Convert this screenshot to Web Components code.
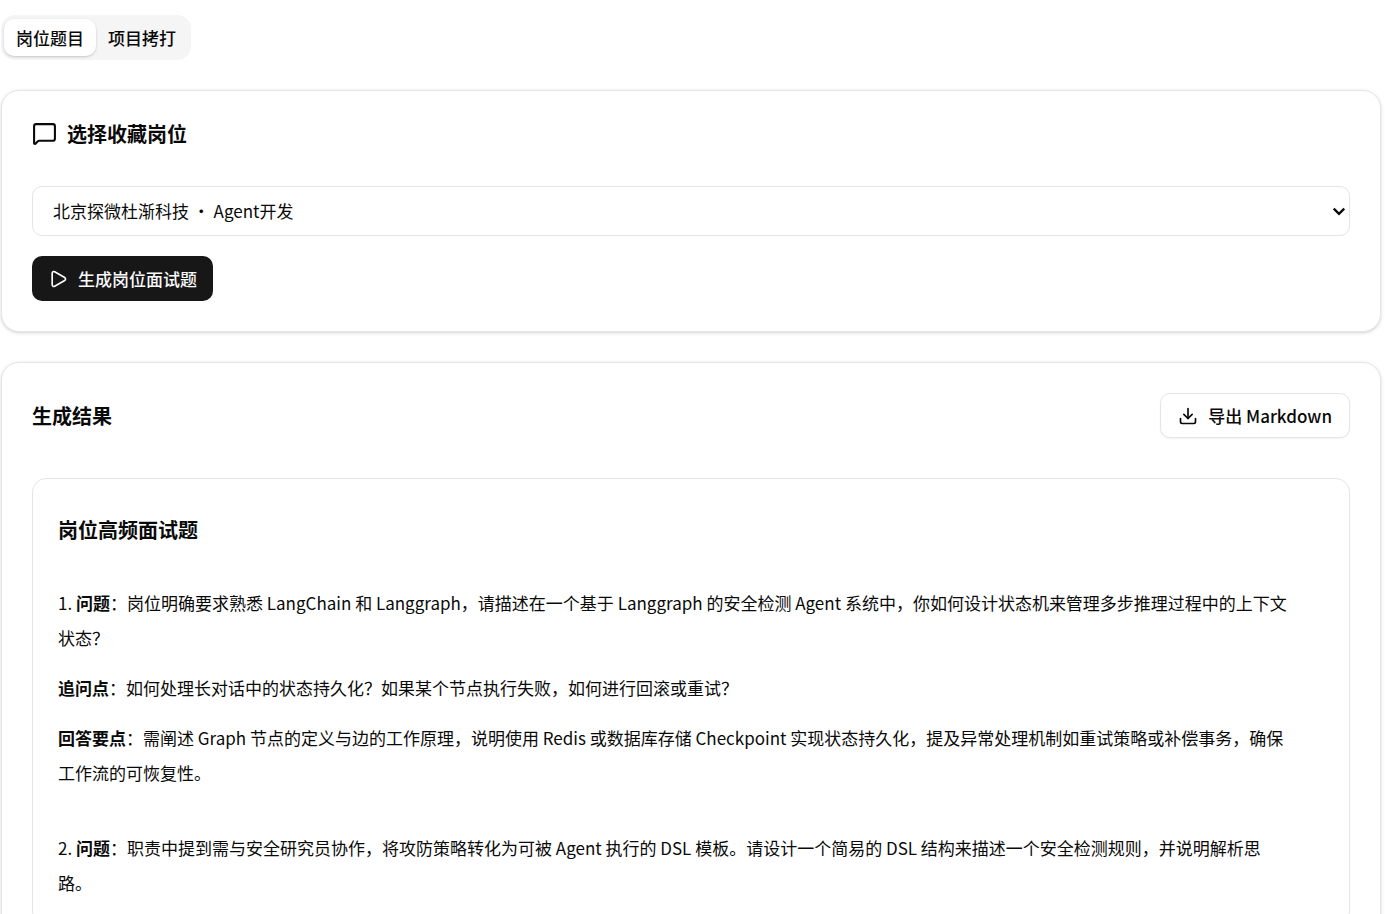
<!DOCTYPE html>
<html lang="zh-CN">
<head>
<meta charset="UTF-8">
<meta name="viewport" content="width=device-width, initial-scale=1">
<title>岗位题目</title>
<style>
    body {
        margin: 0;
        background: #fff;
        color: #0a0a0a;
        font: 17px/25px "Noto Sans CJK SC", sans-serif;
        --border: #e5e5e5;
        --primary: #171717;
        --muted: #f5f5f5;
    }
</style>
</head>
<body>
<interview-page>
    <tab-bar label="面试题类型">
        <tab-item selected>岗位题目</tab-item>
        <tab-item>项目拷打</tab-item>
    </tab-bar>

    <panel-card>
        <ui-icon slot="icon" name="message" size="25"></ui-icon>
        <span slot="title">选择收藏岗位</span>
        <job-select label="收藏岗位">
            <option>北京探微杜渐科技 • Agent开发</option>
        </job-select>
        <ui-button icon="play">生成岗位面试题</ui-button>
    </panel-card>

    <panel-card>
        <span slot="title">生成结果</span>
        <ui-button slot="action" icon="download" variant="outline">导出 Markdown</ui-button>
        <result-box>
            <span slot="heading">岗位高频面试题</span>
            <question-item number="1">
                <span slot="question">岗位明确要求熟悉 LangChain 和 Langgraph，请描述在一个基于 Langgraph 的安全检测 Agent 系统中，你如何设计状态机来管理多步推理过程中的上下文状态？</span>
                <span slot="follow">如何处理长对话中的状态持久化？如果某个节点执行失败，如何进行回滚或重试？</span>
                <span slot="answer">需阐述 Graph 节点的定义与边的工作原理，说明使用 Redis 或数据库存储 Checkpoint 实现状态持久化，提及异常处理机制如重试策略或补偿事务，确保工作流的可恢复性。</span>
            </question-item>
            <question-item number="2">
                <span slot="question">职责中提到需与安全研究员协作，将攻防策略转化为可被 Agent 执行的 DSL 模板。请设计一个简易的 DSL 结构来描述一个安全检测规则，并说明解析思路。</span>
            </question-item>
        </result-box>
    </panel-card>
</interview-page>

<script>
const icons = {
    message: '<path d="M22 17a2 2 0 0 1-2 2H6.828a2 2 0 0 0-1.414.586l-2.202 2.202A.71.71 0 0 1 2 21.286V5a2 2 0 0 1 2-2h16a2 2 0 0 1 2 2z"/>',
    play: '<path d="M5 5a2 2 0 0 1 3.008-1.728l11.997 6.998a2 2 0 0 1 .003 3.458l-12 7A2 2 0 0 1 5 19z"/>',
    download: '<path d="M12 15V3"/><path d="M21 15v4a2 2 0 0 1-2 2H5a2 2 0 0 1-2-2v-4"/><path d="m7 10 5 5 5-5"/>',
    chevron: '<path d="m3 8 9 9 9-9" stroke-width="4" stroke-linecap="butt" stroke-linejoin="miter"/>'
};

class BaseElement extends HTMLElement {
    constructor() {
        super();
        this._sR = this.attachShadow({ mode: 'open' });
    }

    connectedCallback() {
        this._sR.innerHTML = this.template();
    }
}

class UiIcon extends BaseElement {
    template() {
        const size = this.getAttribute('size') || 20;
        return `
        <style>
            :host { display: block; flex: none; }
            svg { display: block; }
        </style>
        <svg width="${size}" height="${size}" viewBox="0 0 24 24" fill="none" stroke="currentColor"
            stroke-width="2" stroke-linecap="round" stroke-linejoin="round" aria-hidden="true">
            ${icons[this.getAttribute('name')]}
        </svg>`;
    }
}

class UiButton extends BaseElement {
    template() {
        return `
        <style>
            :host { display: block; }
            button {
                display: flex;
                align-items: center;
                gap: 10px;
                height: 45px;
                padding: 0 16px;
                border: 0;
                border-radius: 10px;
                background: var(--primary);
                color: #fafafa;
                font: inherit;
                font-weight: 500;
                white-space: nowrap;
                cursor: pointer;
            }
            :host([variant="outline"]) button {
                padding: 0 17px;
                border: 1px solid var(--border);
                background: #fff;
                color: inherit;
                box-shadow: 0 1px 2px rgba(0, 0, 0, 0.05);
            }
        </style>
        <button type="button">
            <ui-icon name="${this.getAttribute('icon')}"></ui-icon>
            <span><slot></slot></span>
        </button>`;
    }
}

class TabBar extends BaseElement {
    template() {
        return `
        <style>
            :host {
                display: flex;
                align-self: flex-start;
                padding: 4px 3px;
                border-radius: 14px;
                background: var(--muted);
            }
        </style>
        <slot></slot>`;
    }

    connectedCallback() {
        super.connectedCallback();
        this.setAttribute('role', 'tablist');
        this.setAttribute('aria-label', this.getAttribute('label'));
        this.addEventListener('click', (e) => {
            const tab = e.target.closest('tab-item');
            if (!tab) return;
            this.querySelectorAll('tab-item').forEach((t) => t.toggleAttribute('selected', t === tab));
        });
    }
}

class TabItem extends BaseElement {
    static get observedAttributes() {
        return ['selected'];
    }

    template() {
        return `
        <style>
            :host { display: block; }
            button {
                display: block;
                height: 37px;
                padding: 0 12px;
                border: 0;
                border-radius: 10px;
                background: transparent;
                color: inherit;
                font: inherit;
                font-weight: 500;
                cursor: pointer;
            }
            :host([selected]) button {
                background: #fff;
                box-shadow: 0 1px 3px rgba(0, 0, 0, 0.12), 0 1px 2px rgba(0, 0, 0, 0.08);
            }
        </style>
        <button type="button" role="tab" aria-selected="${this.hasAttribute('selected')}"><slot></slot></button>`;
    }

    attributeChangedCallback() {
        const button = this._sR.querySelector('button');
        if (button) button.setAttribute('aria-selected', this.hasAttribute('selected'));
    }
}

class JobSelect extends BaseElement {
    template() {
        return `
        <style>
            :host { display: grid; align-items: center; }
            select, ui-icon { grid-area: 1 / 1; }
            select {
                appearance: none;
                width: 100%;
                height: 50px;
                padding: 0 40px 2px 20px;
                border: 1px solid var(--border);
                border-radius: 10px;
                background: transparent;
                color: inherit;
                font: inherit;
            }
            ui-icon {
                justify-self: end;
                margin-right: 4px;
                pointer-events: none;
            }
        </style>
        <select aria-label="${this.getAttribute('label')}"></select>
        <ui-icon name="chevron" size="14"></ui-icon>`;
    }

    connectedCallback() {
        super.connectedCallback();
        this._sR.querySelector('select').append(...this.querySelectorAll('option'));
    }
}

class PanelCard extends BaseElement {
    template() {
        return `
        <style>
            :host {
                display: flex;
                flex-direction: column;
                gap: 40px;
                padding: 30px;
                border: 1px solid var(--border);
                border-radius: 18px;
                background: #fff;
                box-shadow: 0 1px 4px rgba(0, 0, 0, 0.1), 0 1px 2px rgba(0, 0, 0, 0.08);
            }
            header { display: flex; align-items: center; justify-content: space-between; }
            h2 {
                display: flex;
                align-items: center;
                gap: 10px;
                margin: 0;
                font-size: 20px;
                line-height: 24px;
                font-weight: 600;
            }
            .content { display: flex; flex-direction: column; gap: 20px; }
            ::slotted(ui-button:not([slot])) { align-self: flex-start; }
        </style>
        <header>
            <h2><slot name="icon"></slot><slot name="title"></slot></h2>
            <slot name="action"></slot>
        </header>
        <div class="content"><slot></slot></div>`;
    }
}

class ResultBox extends BaseElement {
    template() {
        return `
        <style>
            :host {
                display: block;
                padding: 25px;
                border: 1px solid var(--border);
                border-radius: 14px;
            }
            h3 {
                margin: 0 0 30px;
                font-size: 20px;
                line-height: 51px;
                font-weight: 600;
            }
            /* keeps the reading column short of the border */
            .list { display: grid; gap: 40px; padding-right: 32px; }
        </style>
        <h3><slot name="heading"></slot></h3>
        <div class="list"><slot></slot></div>`;
    }
}

class QuestionItem extends BaseElement {
    template() {
        const row = (name, title) => this.querySelector(`[slot="${name}"]`)
            ? `<p><strong>${title}</strong>：<slot name="${name}"></slot></p>`
            : '';
        return `
        <style>
            :host { display: grid; gap: 15px; line-height: 35px; }
            p { margin: 0; }
            strong { font-weight: 600; }
        </style>
        <p>${this.getAttribute('number')}. <strong>问题</strong>：<slot name="question"></slot></p>
        ${row('follow', '追问点')}
        ${row('answer', '回答要点')}`;
    }
}

class InterviewPage extends BaseElement {
    template() {
        return `
        <style>
            :host { display: block; }
            main {
                display: flex;
                flex-direction: column;
                gap: 30px;
                padding: 15px 4px 30px 1px;
            }
        </style>
        <main><slot></slot></main>`;
    }
}

customElements.define('ui-icon', UiIcon);
customElements.define('ui-button', UiButton);
customElements.define('tab-item', TabItem);
customElements.define('tab-bar', TabBar);
customElements.define('job-select', JobSelect);
customElements.define('panel-card', PanelCard);
customElements.define('result-box', ResultBox);
customElements.define('question-item', QuestionItem);
customElements.define('interview-page', InterviewPage);
</script>
</body>
</html>
